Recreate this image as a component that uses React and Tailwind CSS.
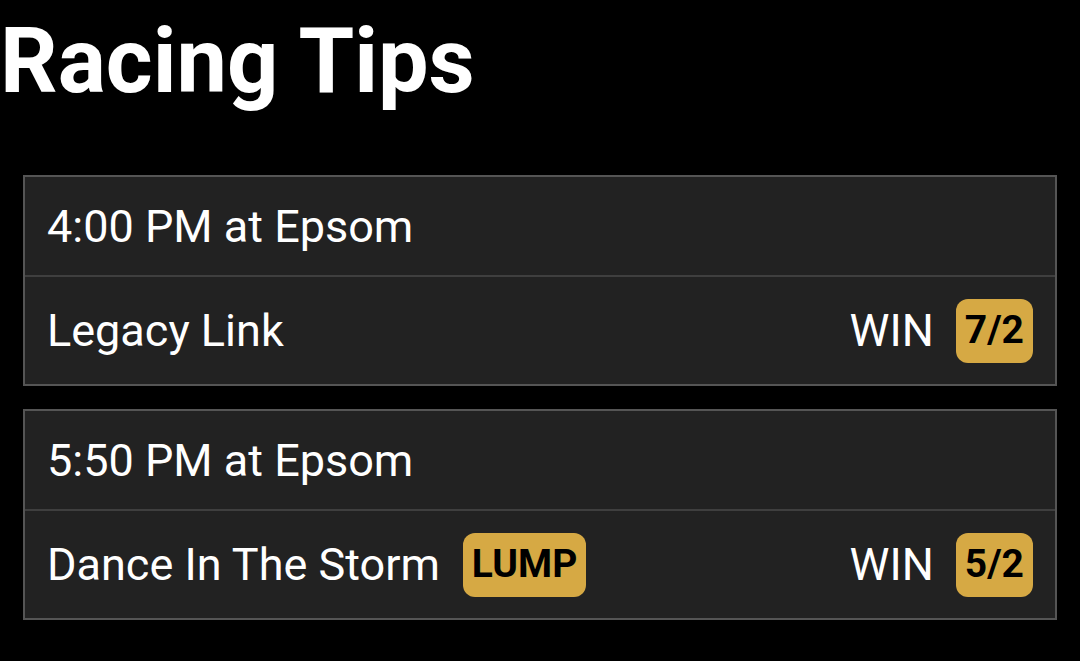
import React from "react";

const tips = [
  { time: "4:00 PM at Epsom", horse: "Legacy Link", tag: null, bet: "WIN", odds: "7/2" },
  { time: "5:50 PM at Epsom", horse: "Dance In The Storm", tag: "LUMP", bet: "WIN", odds: "5/2" },
];

function Badge({ children }) {
  return (
    <span className="inline-flex h-[64px] items-center rounded-[12px] bg-[#d6a944] px-[9px] text-[39px] font-bold leading-none text-black">
      {children}
    </span>
  );
}

function TipCard({ tip }) {
  return (
    <div className="border-2 border-[#555555] bg-[#222222]">
      <div className="flex h-[98px] items-center px-[22px]">
        <span>{tip.time}</span>
      </div>
      <div className="h-[2px] bg-[#3f3f3f]" />
      <div className="flex h-[107px] items-center justify-between px-[22px]">
        <div className="flex items-center gap-[23px]">
          <span>{tip.horse}</span>
          {tip.tag && <Badge>{tip.tag}</Badge>}
        </div>
        <div className="flex items-center gap-[22px]">
          <span>{tip.bet}</span>
          <Badge>{tip.odds}</Badge>
        </div>
      </div>
    </div>
  );
}

export default function App() {
  return (
    <div className="min-h-[661px] w-full bg-black font-['Roboto',sans-serif] text-white">
      <h1 className="pt-[17px] text-[90px] font-bold leading-none">Racing Tips</h1>
      <div className="mx-[23px] mt-[68px] flex flex-col gap-[23px] text-[45px] leading-none">
        {tips.map((t) => (
          <TipCard key={t.time} tip={t} />
        ))}
      </div>
    </div>
  );
}
